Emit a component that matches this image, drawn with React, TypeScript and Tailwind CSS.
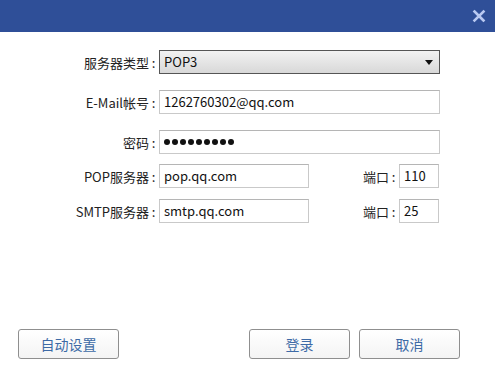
import React from 'react';

const font = { fontFamily: '"Noto Sans CJK SC", "Liberation Sans", sans-serif' };

function Label({ children, className = '' }: { children: React.ReactNode; className?: string }) {
  return (
    <div className={`flex justify-end items-center text-[13px] text-[#222] leading-none ${className}`}>
      <span>{children}</span>
      <span className="w-[9px] text-center">:</span>
    </div>
  );
}

function Field({ value, className = '' }: { value: string; className?: string }) {
  return (
    <div
      className={`h-[24px] border border-[#c9c9c9] border-t-[#b5b5b5] bg-white flex items-center px-[4px] text-[13px] text-[#111] ${className}`}
    >
      {value}
    </div>
  );
}

function Btn({ children }: { children: React.ReactNode }) {
  return (
    <button className="w-[101px] h-[30px] rounded-[3px] border border-[#8f8f8f] bg-gradient-to-b from-white to-[#f4f4f4] text-[14px] text-[#3d6aa6] flex items-center justify-center">
      {children}
    </button>
  );
}

export default function App() {
  return (
    <div className="w-[495px] h-[382px] bg-white flex flex-col" style={font}>
      {/* Title bar */}
      <div className="h-[32px] bg-[#2f4f98] flex justify-end items-center pr-[9px]">
        <svg width="14" height="14" viewBox="0 0 14 14">
          <path d="M2.5 2.5 L11.5 11.5 M11.5 2.5 L2.5 11.5" stroke="#b9c9f2" strokeWidth="2.6" strokeLinecap="square" />
        </svg>
      </div>

      {/* Form */}
      <div className="flex flex-col pt-[18px]">
        <div className="flex items-center">
          <Label className="w-[159px] pr-[1px]">服务器类型</Label>
          <div className="w-[281px] h-[24px] border border-[#555] bg-gradient-to-b from-[#f2f2f2] to-[#d8d8d8] flex items-center justify-between pl-[4px] pr-[6px] text-[13px] text-[#111]">
            <span>POP3</span>
            <svg width="8" height="5" viewBox="0 0 8 5">
              <path d="M0 0 H8 L4 5 Z" fill="#111" />
            </svg>
          </div>
        </div>

        <div className="flex items-center mt-[16px]">
          <Label className="w-[159px] pr-[1px]">E-Mail帐号</Label>
          <Field value="1262760302@qq.com" className="w-[281px]" />
        </div>

        <div className="flex items-center mt-[16px]">
          <Label className="w-[159px] pr-[1px]">密码</Label>
          <div className="w-[281px] h-[24px] border border-[#c9c9c9] border-t-[#b5b5b5] bg-white flex items-center gap-[2px] pl-[4px]">
            {Array.from({ length: 9 }).map((_, i) => (
              <span key={i} className="w-[6px] h-[6px] rounded-full bg-[#111]" />
            ))}
          </div>
        </div>

        <div className="flex items-center mt-[10px]">
          <Label className="w-[159px] pr-[1px]">POP服务器</Label>
          <Field value="pop.qq.com" className="w-[150px]" />
          <Label className="w-[90px] pr-[1px]">端口</Label>
          <Field value="110" className="w-[40px]" />
        </div>

        <div className="flex items-center mt-[11px]">
          <Label className="w-[159px] pr-[1px]">SMTP服务器</Label>
          <Field value="smtp.qq.com" className="w-[150px]" />
          <Label className="w-[90px] pr-[1px]">端口</Label>
          <Field value="25" className="w-[40px]" />
        </div>
      </div>

      {/* Buttons */}
      <div className="mt-auto mb-[23px] flex items-center px-[18px]">
        <Btn>自动设置</Btn>
        <div className="flex-1" />
        <div className="flex gap-[9px] mr-[17px]">
          <Btn>登录</Btn>
          <Btn>取消</Btn>
        </div>
      </div>
    </div>
  );
}
